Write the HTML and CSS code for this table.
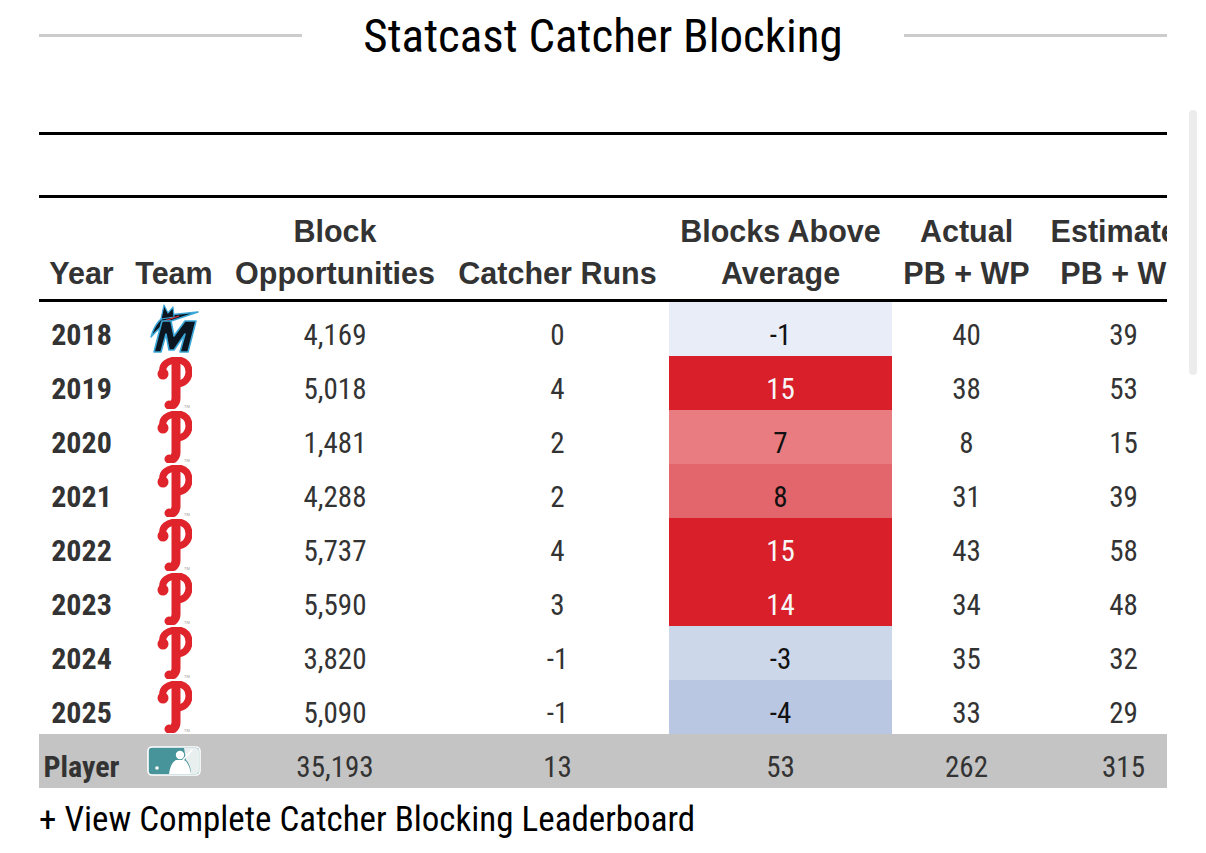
FILE: index.html
```html
<!DOCTYPE html>
<html lang="en">
<head>
<meta charset="utf-8">
<title>Statcast Catcher Blocking</title>
<link rel="stylesheet" href="styles.css">
</head>
<body>
<div class="page">
  <div class="title-row">
    <div class="rule"></div>
    <h1 class="title">Statcast Catcher Blocking</h1>
    <div class="rule"></div>
  </div>
  <div class="divider"></div>
  <div class="table-wrap">
    <table class="stats">
      <colgroup>
        <col class="w-year"><col class="w-team"><col class="w-opp"><col class="w-runs"><col class="w-baa"><col class="w-act"><col class="w-est">
      </colgroup>
      <thead>
        <tr>
          <th>Year</th>
          <th>Team</th>
          <th>Block Opportunities</th>
          <th>Catcher Runs</th>
          <th>Blocks Above Average</th>
          <th>Actual PB + WP</th>
          <th>Estimated PB + WP</th>
        </tr>
      </thead>
      <tbody>
        <tr>
          <td class="year">2018</td>
          <td class="team"><svg class="logo-mia" viewBox="0 0 50 50" width="50" height="50"><path d="M2 33 C5 22 11 14 19 11 L49 8 L22 17 C14 20 8 26 2 33 Z" fill="#0b1620" stroke="#3aa7d8" stroke-width="1.4" stroke-linejoin="round"/><path d="M12 15 L15 1 L19 9 L24 3 L25 13 Z" fill="#0b1620" stroke="#3aa7d8" stroke-width="1.2" stroke-linejoin="round"/><path d="M15 17 L30 12" stroke="#ef3340" stroke-width="1.1"/><path d="M5 48 L13 17 L22 17 L25 32 L36 17 L47 17 L39 48 L31 48 L36 30 L25 46 L20 46 L17 30 L12 48 Z" fill="#0b1620" stroke="#3aa7d8" stroke-width="1.6" stroke-linejoin="round"/></svg></td>
          <td>4,169</td><td>0</td><td class="baa c-l1">-1</td><td>40</td><td>39</td>
        </tr>
        <tr>
          <td class="year">2019</td>
          <td class="team"><svg class="logo-phi" viewBox="0 0 36 52" width="36" height="52"><path d="M7 16 C5 8 12 3 21 3 C30 3 33 9 33 15 C33 22 28 27 21 27" fill="none" stroke="#e0242c" stroke-width="7" stroke-linecap="round"/><path d="M20 8 L20 41 C20 46 17 49 13 48" fill="none" stroke="#e0242c" stroke-width="9" stroke-linecap="round"/><circle cx="7" cy="17" r="5.5" fill="#e0242c"/><text x="28" y="51" font-size="4" fill="#999" font-family="Liberation Sans, sans-serif">TM</text></svg></td>
          <td>5,018</td><td>4</td><td class="baa c-r3">15</td><td>38</td><td>53</td>
        </tr>
        <tr>
          <td class="year">2020</td>
          <td class="team"><svg class="logo-phi" viewBox="0 0 36 52" width="36" height="52"><path d="M7 16 C5 8 12 3 21 3 C30 3 33 9 33 15 C33 22 28 27 21 27" fill="none" stroke="#e0242c" stroke-width="7" stroke-linecap="round"/><path d="M20 8 L20 41 C20 46 17 49 13 48" fill="none" stroke="#e0242c" stroke-width="9" stroke-linecap="round"/><circle cx="7" cy="17" r="5.5" fill="#e0242c"/><text x="28" y="51" font-size="4" fill="#999" font-family="Liberation Sans, sans-serif">TM</text></svg></td>
          <td>1,481</td><td>2</td><td class="baa c-r1">7</td><td>8</td><td>15</td>
        </tr>
        <tr>
          <td class="year">2021</td>
          <td class="team"><svg class="logo-phi" viewBox="0 0 36 52" width="36" height="52"><path d="M7 16 C5 8 12 3 21 3 C30 3 33 9 33 15 C33 22 28 27 21 27" fill="none" stroke="#e0242c" stroke-width="7" stroke-linecap="round"/><path d="M20 8 L20 41 C20 46 17 49 13 48" fill="none" stroke="#e0242c" stroke-width="9" stroke-linecap="round"/><circle cx="7" cy="17" r="5.5" fill="#e0242c"/><text x="28" y="51" font-size="4" fill="#999" font-family="Liberation Sans, sans-serif">TM</text></svg></td>
          <td>4,288</td><td>2</td><td class="baa c-r2">8</td><td>31</td><td>39</td>
        </tr>
        <tr>
          <td class="year">2022</td>
          <td class="team"><svg class="logo-phi" viewBox="0 0 36 52" width="36" height="52"><path d="M7 16 C5 8 12 3 21 3 C30 3 33 9 33 15 C33 22 28 27 21 27" fill="none" stroke="#e0242c" stroke-width="7" stroke-linecap="round"/><path d="M20 8 L20 41 C20 46 17 49 13 48" fill="none" stroke="#e0242c" stroke-width="9" stroke-linecap="round"/><circle cx="7" cy="17" r="5.5" fill="#e0242c"/><text x="28" y="51" font-size="4" fill="#999" font-family="Liberation Sans, sans-serif">TM</text></svg></td>
          <td>5,737</td><td>4</td><td class="baa c-r3">15</td><td>43</td><td>58</td>
        </tr>
        <tr>
          <td class="year">2023</td>
          <td class="team"><svg class="logo-phi" viewBox="0 0 36 52" width="36" height="52"><path d="M7 16 C5 8 12 3 21 3 C30 3 33 9 33 15 C33 22 28 27 21 27" fill="none" stroke="#e0242c" stroke-width="7" stroke-linecap="round"/><path d="M20 8 L20 41 C20 46 17 49 13 48" fill="none" stroke="#e0242c" stroke-width="9" stroke-linecap="round"/><circle cx="7" cy="17" r="5.5" fill="#e0242c"/><text x="28" y="51" font-size="4" fill="#999" font-family="Liberation Sans, sans-serif">TM</text></svg></td>
          <td>5,590</td><td>3</td><td class="baa c-r3">14</td><td>34</td><td>48</td>
        </tr>
        <tr>
          <td class="year">2024</td>
          <td class="team"><svg class="logo-phi" viewBox="0 0 36 52" width="36" height="52"><path d="M7 16 C5 8 12 3 21 3 C30 3 33 9 33 15 C33 22 28 27 21 27" fill="none" stroke="#e0242c" stroke-width="7" stroke-linecap="round"/><path d="M20 8 L20 41 C20 46 17 49 13 48" fill="none" stroke="#e0242c" stroke-width="9" stroke-linecap="round"/><circle cx="7" cy="17" r="5.5" fill="#e0242c"/><text x="28" y="51" font-size="4" fill="#999" font-family="Liberation Sans, sans-serif">TM</text></svg></td>
          <td>3,820</td><td>-1</td><td class="baa c-l2">-3</td><td>35</td><td>32</td>
        </tr>
        <tr>
          <td class="year">2025</td>
          <td class="team"><svg class="logo-phi" viewBox="0 0 36 52" width="36" height="52"><path d="M7 16 C5 8 12 3 21 3 C30 3 33 9 33 15 C33 22 28 27 21 27" fill="none" stroke="#e0242c" stroke-width="7" stroke-linecap="round"/><path d="M20 8 L20 41 C20 46 17 49 13 48" fill="none" stroke="#e0242c" stroke-width="9" stroke-linecap="round"/><circle cx="7" cy="17" r="5.5" fill="#e0242c"/><text x="28" y="51" font-size="4" fill="#999" font-family="Liberation Sans, sans-serif">TM</text></svg></td>
          <td>5,090</td><td>-1</td><td class="baa c-l3">-4</td><td>33</td><td>29</td>
        </tr>
      </tbody>
      <tfoot>
        <tr>
          <td class="year player">Player</td>
          <td class="team"><svg class="logo-mlb" viewBox="0 0 54 30" width="54" height="30"><rect x="1" y="1" width="52" height="28" rx="4" fill="#47949b" stroke="#ffffff" stroke-width="1.6"/><path d="M37 2 L49 2 C51 2 52 3 52 5 L52 25 C52 27 51 28 49 28 L44 28 C44 22 42 17 39 14 Z" fill="#e9eeee"/><circle cx="33" cy="9" r="4.2" fill="#fff"/><path d="M22 28 C23 21 25 16 29 14 L37 14 C41 16 43 22 44 28 Z" fill="#fff"/><path d="M36 14 L45 4" stroke="#fff" stroke-width="1.8" stroke-linecap="round"/><circle cx="10" cy="22" r="1.8" fill="#fff"/></svg></td>
          <td>35,193</td><td>13</td><td>53</td><td>262</td><td>315</td>
        </tr>
      </tfoot>
    </table>
  </div>
  <p class="more">+ View Complete Catcher Blocking Leaderboard</p>
</div>
<div class="scrollbar"></div>
</body>
</html>
```
FILE: styles.css
```css
html, body {
  margin: 0;
  padding: 0;
  background: #ffffff;
}

body {
  font-family: "Roboto Condensed", "Roboto", sans-serif;
  font-stretch: 75%;
  color: #000;
}

.page {
  padding: 0 39px;
}

.title-row {
  display: flex;
  align-items: center;
  gap: 61px;
  height: 70px;
}

.rule {
  flex: 1;
  height: 3px;
  background: #cccccc;
}

.title {
  margin: 0;
  font-family: "Roboto Condensed", "Roboto", sans-serif;
  font-stretch: 75%;
  font-weight: 400;
  font-size: 47px;
  line-height: 1;
  color: #000;
  white-space: nowrap;
}

.divider {
  margin-top: 62px;
  border-top: 3px solid #000;
  height: 60px;
}

.table-wrap {
  overflow: hidden;
  width: 1128px;
}

.stats {
  width: 1167px;
  table-layout: fixed;
  border-collapse: separate;
  border-spacing: 0;
  border-top: 3px solid #000;
}

.w-year { width: 85px; }
.w-team { width: 100px; }
.w-opp { width: 222px; }
.w-runs { width: 223px; }
.w-baa { width: 223px; }
.w-act { width: 149px; }
.w-est { width: 165px; }

.stats thead tr {
  height: 104px;
}

.stats th {
  font-family: "Liberation Sans", Arial, sans-serif;
  font-stretch: normal;
  font-weight: 700;
  font-size: 30.5px;
  line-height: 42px;
  color: #333333;
  text-align: center;
  vertical-align: bottom;
  padding: 0 9px 5px;
  border-bottom: 3px solid #000;
  white-space: normal;
}

.stats tbody tr,
.stats tfoot tr {
  height: 54px;
}

.stats td {
  font-size: 29px;
  line-height: 34px;
  color: #333333;
  text-align: center;
  vertical-align: middle;
  padding: 12px 10px 0;
  white-space: nowrap;
}

.stats td.year {
  font-weight: 700;
  font-size: 30px;
}

.stats td.player {
  padding-left: 0;
  padding-right: 0;
}

.stats td.team {
  padding: 0;
}

.team svg {
  display: block;
  margin: 0 auto;
}

.stats td.baa { color: #111111; }
.c-l1 { background: #e9edf7; }
.c-l2 { background: #cdd7ea; }
.c-l3 { background: #b9c7e2; }
.c-r1 { background: #e87c81; }
.c-r2 { background: #e2666b; }
.stats td.c-r3 { background: #d81f2a; color: #f7f7f7; }

.stats tfoot td {
  background: #c4c4c4;
  color: #333333;
}

.more {
  margin: 11px 0 0;
  font-size: 35px;
  line-height: 41px;
  color: #000;
}

.scrollbar {
  position: fixed;
  top: 110px;
  right: 9px;
  width: 8px;
  height: 265px;
  border-radius: 4px;
  background: #ececec;
}
```
